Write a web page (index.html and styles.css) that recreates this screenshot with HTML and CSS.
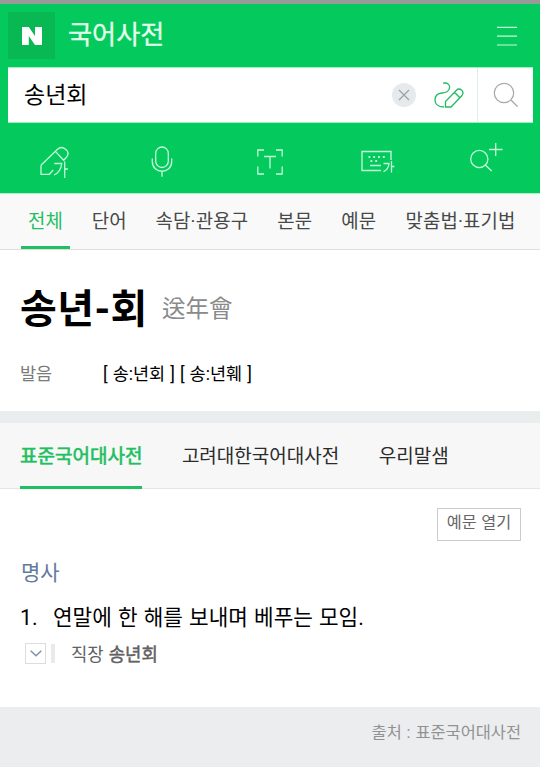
FILE: index.html
```html
<!DOCTYPE html>
<html lang="ko">
<head>
<meta charset="utf-8">
<title>국어사전</title>
<link rel="stylesheet" href="styles.css">
</head>
<body>
<header class="header">
  <div class="brand-row">
    <div class="logo"><svg width="20" height="18" viewBox="0 0 20 18"><path fill="#fff" d="M0 0h6.800l6.200 9V0h7v18h-7L6.800 9v9H0z"/></svg></div>
    <h1 class="brand">국어사전</h1>
    <svg class="menu" width="20" height="20" viewBox="0 0 20 20" stroke="#c9f8dc" stroke-width="1.200"><path d="M0 1.400h20M0 10.200h20M0 19h20"/></svg>
  </div>
  <div class="search">
    <span class="query">송년회</span>
    <svg class="clear" width="24" height="24" viewBox="0 0 24 24"><circle cx="12" cy="12" r="12" fill="#e6eaec"/><path d="M7 7l10 10M17 7L7 17" stroke="#9da2a5" stroke-width="1.300"/></svg>
    <svg class="draw" width="30" height="26" viewBox="0 0 30 26" fill="none" stroke="#20bd60" stroke-width="1.300"><path d="M9 1.200C14 .3 16 3 15.500 6S12 10.800 8 11C3 11.300 1 14.500 1 18s2.500 7 9 7M11.500 25v-5.500L22.500 8.200c3-3 8.500 1 5.500 5.300L17 25zM20.500 10.300l5.300 5.500"/></svg>
    <div class="submit"><svg width="26" height="26" viewBox="0 0 26 26" fill="none" stroke="#aaa" stroke-width="1.300"><circle cx="11" cy="11" r="9.700"/><path d="M18 18l6.700 6.700"/></svg></div>
  </div>
  <div class="tools">
    <svg width="28" height="34" viewBox="0 0 28 34"><path d="M1 20.300L17.500 4.200c5-4.500 13.500 1.800 9.200 7.800l-3 3.200-8.400-8.800M1 20.300v9h8.200l4-4.300M14.300 18.500h7.400q-.8 8.500-7.700 11.500M24.700 16.500v16.500M24.700 24h3.200"/></svg>
    <svg width="22" height="34" viewBox="0 0 22 34"><rect x="4.700" y="2" width="12.600" height="20.500" rx="6.300"/><path d="M1.300 13.500v3c0 13 19.400 13 19.400 0v-3M11 26.500v5.200"/></svg>
    <svg width="26" height="34" viewBox="0 0 26 34"><path d="M7 5H.8v6.500M19 5h6.200v6.500M7 29H.8v-7.500M19 29h6.200v-7.500M7 11.500h12M13 11.500v12"/></svg>
    <svg width="34" height="34" viewBox="0 0 34 34"><path d="M20 25.500H1V6.500h29v8.500"/><path d="M7.500 12h17M9.500 16h8" stroke-width="1.800" stroke-dasharray="1.800 3"/><path d="M9 20.500h11M22.500 18.500h5.500q-.5 6-5.500 8.200M30.500 16v11.500M30.500 21.500h2.800"/></svg>
    <svg width="32" height="34" viewBox="0 0 32 34"><circle cx="9.300" cy="14" r="8.600"/><path d="M15.300 20.100l6.400 5.900M19 4.500h13.500M25.700-2v13"/></svg>
  </div>
</header>
<nav class="filters">
  <a class="filter active">전체</a><a class="filter">단어</a><a class="filter">속담·관용구</a><a class="filter">본문</a><a class="filter">예문</a><a class="filter">맞춤법·표기법</a>
</nav>
<section class="entry">
  <div class="headline"><h2 class="word">송년-회</h2><span class="hanja" lang="ko">送年會</span></div>
  <div class="pronounce"><span class="label">발음</span><span class="sound">[ 송:년회 ] [ 송:년훼 ]</span></div>
</section>
<nav class="sources">
  <a class="source selected">표준국어대사전</a><a class="source">고려대한국어대사전</a><a class="source">우리말샘</a>
</nav>
<main class="content">
  <div class="actions"><button class="expand">예문 열기</button></div>
  <h3 class="pos">명사</h3>
  <div class="meaning"><span class="number">1.</span><span class="definition">연말에 한 해를 보내며 베푸는 모임.</span></div>
  <div class="example"><span class="toggle"><svg width="12" height="7" viewBox="0 0 12 7" fill="none" stroke="#8291a5" stroke-width="1.500"><path d="M.7.700L6 5.800 11.300.7"/></svg></span><i class="bar"></i><span class="phrase">직장 <b>송년회</b></span></div>
</main>
<footer class="credit">출처 : 표준국어대사전</footer>
</body>
</html>
```
FILE: styles.css
```css
* { box-sizing: border-box; }
body { margin: 0; width: 540px; height: 767px; overflow: hidden; background: #fff; color: #000; font-family: "Noto Sans CJK KR", sans-serif; white-space: nowrap; }
h1, h2, h3 { margin: 0; }
svg { display: block; flex: none; }
.filters, .word, .sound, .meaning, .credit { font-family: Roboto, "Noto Sans CJK KR", sans-serif; }
.header { height: 193px; background: #04ca5d; border-top: 4px solid #999; }
.brand-row { display: flex; height: 63px; padding: 8px 23px 0 8px; }
.logo { display: flex; align-items: center; justify-content: center; width: 47px; height: 47px; background: #07b853; }
.brand { margin-left: 13px; color: #e1ffec; font-size: 26.200px; font-weight: 400; line-height: 43px; -webkit-text-stroke: .3px #e1ffec; }
.menu { margin: 14px 0 0 auto; }
.search { display: flex; align-items: center; height: 56px; margin: 0 7px 0 8px; padding-left: 16px; background: #fff; border: 1px solid #9df0bf; border-width: 1px 0; }
.query { font-size: 23px; line-height: 51px; align-self: flex-start; }
.clear { margin-left: auto; }
.draw { margin: 0 13px 0 18px; }
.submit { display: flex; align-items: center; justify-content: center; width: 56px; height: 54px; border-left: 1px solid #dfeee8; }
.tools { display: grid; grid-template-columns: repeat(5, 1fr); justify-items: center; align-items: center; height: 70px; padding-top: 7px; }
.tools svg { overflow: visible; fill: none; stroke: #c6f8da; stroke-width: 1.300; }
.filters { display: flex; height: 57px; padding-left: 21px; background: #f9f9f9; border-top: 1px solid #aaf3c8; border-bottom: 1px solid #dedede; }
.filter { height: 55px; margin-right: 15px; padding: 0 7px; color: #484848; font-size: 18.900px; line-height: 56px; }
.filter.active { color: #20bf61; border-bottom: 3px solid #20bf61; }
.filter:nth-child(n+3) { letter-spacing: .15px; }
.entry { height: 161px; padding: 30px 20px 0; }
.headline { display: flex; height: 70px; }
.word { width: 127px; font-size: 40px; font-weight: 700; line-height: 59px; letter-spacing: .4px; }
.hanja { margin-left: 15px; color: #8a8a8a; font-size: 23.500px; line-height: 55px; }
.pronounce { display: flex; font-size: 17.500px; line-height: 46px; }
.label { width: 83px; color: #7b7b7b; }
.sound { line-height: 49px; word-spacing: .7px; }
.sources { display: flex; height: 78px; padding-left: 20px; border-top: 12px solid #eaeded; background: #f7f7f7; border-bottom: 1px solid #e5e5e5; }
.source { height: 66px; margin-right: 39.500px; color: #2b2b2b; font-size: 19px; line-height: 64px; }
.selected { color: #20bf61; -webkit-text-stroke: .6px; border-bottom: 3px solid #20bf61; }
.content { height: 218px; padding: 19px 19px 0 20px; }
.actions { display: flex; justify-content: flex-end; height: 46px; }
.expand { width: 84px; height: 33px; padding: 0; background: #fff; border: 1px solid #ccc; color: #666; font: 16.300px/25px "Noto Sans CJK KR", sans-serif; display: flex; justify-content: center; }
.pos { padding-left: 1px; color: #627b9d; font-size: 21px; font-weight: 400; line-height: 34px; }
.meaning { display: flex; height: 34px; margin-top: 11px; font-size: 21.300px; line-height: 38px; }
.number { width: 33px; }
.definition { word-spacing: .9px; }
.example { display: flex; align-items: center; height: 41px; padding-left: 5px; }
.toggle { display: flex; align-items: center; justify-content: center; width: 21px; height: 21px; border: 1px solid #ddd; }
.bar { width: 4px; height: 19px; margin-left: 5px; background: #eaeaea; }
.phrase { margin: -2px 0 0 16px; color: #626262; font-size: 17.800px; line-height: 34px; }
.phrase b { font-weight: 400; -webkit-text-stroke: .5px; }
.credit { height: 60px; padding: 0 19px; background: #ebedef; color: #929292; font-size: 16.400px; line-height: 52px; text-align: right; word-spacing: .8px; }
```
